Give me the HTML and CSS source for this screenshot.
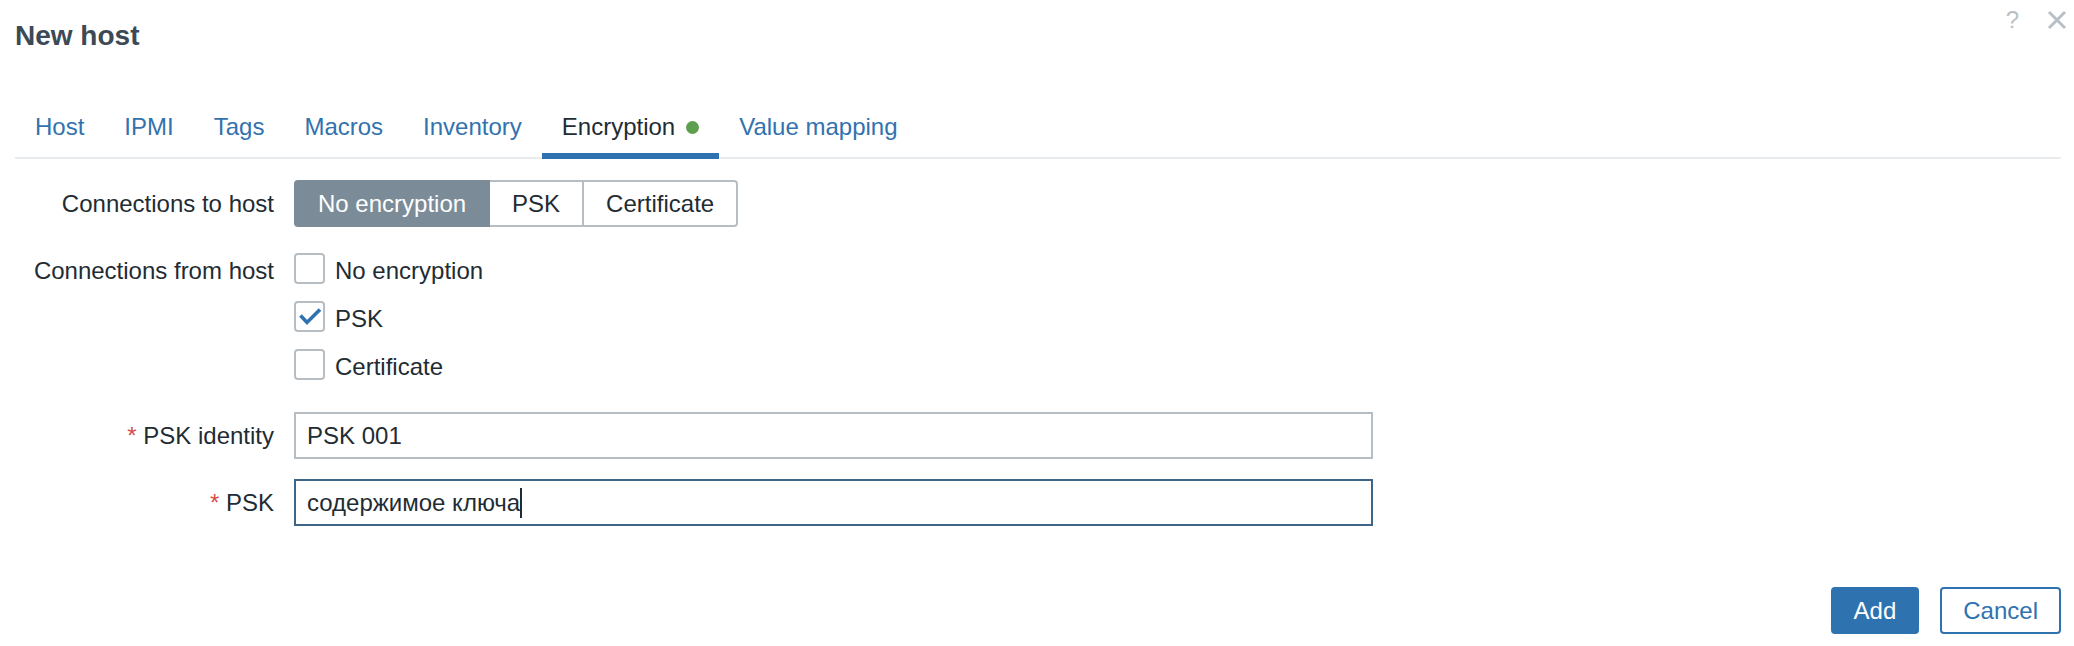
FILE: index.html
```html
<!DOCTYPE html>
<html lang="en">
<head>
<meta charset="utf-8">
<title>New host</title>
<link rel="stylesheet" href="styles.css">
</head>
<body>
<div class="dialog">
  <div class="dialog-tools">
    <span class="help">?</span>
    <svg class="close" width="20" height="20" viewBox="0 0 20 20" aria-label="Close">
      <path d="M2 2 L18 18 M18 2 L2 18" stroke="#b9c0c5" stroke-width="3" fill="none"/>
    </svg>
  </div>
  <h2 class="title">New host</h2>
  <ul class="tabs">
    <li class="tab"><a>Host</a></li>
    <li class="tab"><a>IPMI</a></li>
    <li class="tab"><a>Tags</a></li>
    <li class="tab"><a>Macros</a></li>
    <li class="tab"><a>Inventory</a></li>
    <li class="tab tab-active"><a>Encryption<span class="dot"></span></a></li>
    <li class="tab"><a>Value mapping</a></li>
  </ul>
  <div class="form">
    <div class="row row-seg">
      <label class="label">Connections to host</label>
      <div class="segmented">
        <span class="seg seg-on">No encryption</span>
        <span class="seg">PSK</span>
        <span class="seg">Certificate</span>
      </div>
    </div>
    <div class="row row-checks">
      <label class="label label-top">Connections from host</label>
      <div class="checks">
        <div class="check"><span class="box"></span><span class="check-text">No encryption</span></div>
        <div class="check"><span class="box"><svg width="27" height="27" viewBox="0 0 27 27"><path d="M4.5 12.5 L11 19.5 L24 6.5" stroke="#2f72b0" stroke-width="3.6" fill="none"/></svg></span><span class="check-text">PSK</span></div>
        <div class="check"><span class="box"></span><span class="check-text">Certificate</span></div>
      </div>
    </div>
    <div class="row row-input1">
      <label class="label"><span class="req">*</span> PSK identity</label>
      <div class="field">PSK 001</div>
    </div>
    <div class="row row-input2">
      <label class="label"><span class="req">*</span> PSK</label>
      <div class="field field-focus">содержимое ключа<span class="caret"></span></div>
    </div>
  </div>
  <div class="footer">
    <button class="btn btn-primary">Add</button>
    <button class="btn btn-alt">Cancel</button>
  </div>
</div>
</body>
</html>
```
FILE: styles.css
```css
* { box-sizing: border-box; }
html, body { margin: 0; padding: 0; background: #ffffff; }
body {
  font-family: "Liberation Sans", Arial, Helvetica, sans-serif;
  font-size: 24px;
  color: #1f2c33;
}
.dialog {
  position: relative;
  width: 2074px;
  height: 646px;
  padding: 20px 13px 0 15px;
}
.dialog-tools {
  position: absolute;
  top: 6px;
  right: 7px;
  display: flex;
  align-items: center;
  gap: 28px;
}
.help {
  color: #b9c0c5;
  font-size: 24px;
  line-height: 28px;
}
.close { display: block; }
.title {
  margin: 0;
  font-size: 28px;
  line-height: 32px;
  font-weight: bold;
  color: #3b4a56;
}
.tabs {
  list-style: none;
  margin: 61px 0 0 0;
  padding: 0;
  display: flex;
  border-bottom: 2px solid #e9ecee;
}
.tab {
  margin-bottom: -2px;
  padding: 0 20px 12px;
  line-height: 28px;
  border-bottom: 6px solid transparent;
  color: #3272ae;
}
.tab-active {
  color: #1f2c33;
  border-bottom-color: #2f72b0;
}
.dot {
  display: inline-block;
  width: 13px;
  height: 13px;
  margin-left: 11px;
  border-radius: 50%;
  background: #5d9f4e;
  vertical-align: 1px;
}
.form {
  margin-top: 21px;
  display: flex;
  flex-direction: column;
}
.row {
  display: grid;
  grid-template-columns: 259px 1fr;
  column-gap: 20px;
  align-items: center;
}
.row-checks { margin-top: 26px; }
.row-input1 { margin-top: 32px; }
.row-input2 { margin-top: 20px; }
.label {
  text-align: right;
  white-space: nowrap;
}
.label-top {
  align-self: start;
  line-height: 27px;
  padding-top: 4px;
}
.req { color: #d64e48; }
.segmented {
  display: flex;
  height: 47px;
}
.seg {
  border: 2px solid #b7bec3;
  padding: 0 22px;
  line-height: 43px;
  background: #ffffff;
}
.seg + .seg { border-left: 0; }
.seg:first-child { border-radius: 4px 0 0 4px; }
.seg:last-child { border-radius: 0 4px 4px 0; }
.seg-on {
  background: #7b8c98;
  border-color: #7b8c98;
  color: #ffffff;
}
.checks {
  display: flex;
  flex-direction: column;
  gap: 17px;
}
.check {
  display: flex;
  align-items: flex-start;
  gap: 10px;
  height: 31px;
}
.check-text {
  line-height: 27px;
  padding-top: 4px;
}
.box {
  width: 31px;
  height: 31px;
  border: 2px solid #b7bec3;
  border-radius: 4px;
  background: #ffffff;
}
.box svg { display: block; }
.field {
  width: 1079px;
  height: 47px;
  border: 2px solid #b7bec3;
  padding: 0 11px;
  line-height: 43px;
  white-space: nowrap;
}
.field-focus { border-color: #3d6489; }
.caret {
  display: inline-block;
  width: 0;
  height: 30px;
  border-left: 2px solid #1f2c33;
  vertical-align: -7px;
}
.footer {
  margin-top: 61px;
  display: flex;
  justify-content: flex-end;
  gap: 21px;
}
.btn {
  height: 47px;
  padding: 0 21px;
  border: 2px solid #2f72b0;
  border-radius: 4px;
  font-family: inherit;
  font-size: 24px;
  line-height: 43px;
  cursor: pointer;
}
.btn-primary {
  background: #2f72b0;
  color: #ffffff;
}
.btn-alt {
  background: #ffffff;
  color: #2f72b0;
}
```
